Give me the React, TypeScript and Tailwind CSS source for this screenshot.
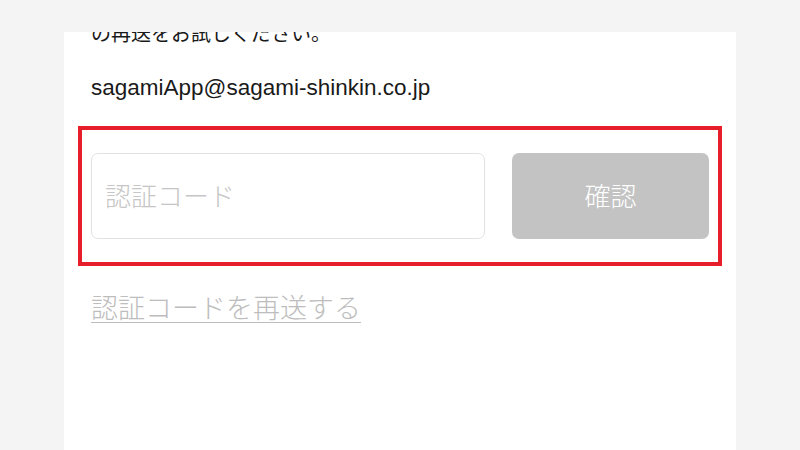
import React, { useState } from 'react';

const App: React.FC = () => {
  const [code, setCode] = useState('');

  return (
    <div className="h-[450px] w-[800px] bg-[#f4f4f4] flex justify-center pt-[32px] overflow-hidden">
      <div className="w-[672px] h-full bg-white overflow-hidden px-[27px] font-['Liberation_Sans','Noto_Sans_CJK_JP',sans-serif] text-[#1a1a1a]">
        {/* Message (top part scrolled out of view) */}
        <p className="-mt-[14px] text-[20px] leading-[30px] font-['Noto_Sans_CJK_JP',sans-serif]">
          の再送をお試しください。
        </p>
        <p className="mt-[25px] text-[22.5px] leading-[30px]">sagamiApp@sagami-shinkin.co.jp</p>

        {/* Highlighted input row */}
        <div className="mt-[23px] -mx-[13px] border-4 border-[#e61e2a] px-[9px] py-[23px]">
          <div className="flex items-center gap-[27px]">
            <input
              value={code}
              onChange={(e) => setCode(e.target.value)}
              placeholder="認証コード"
              className="w-[394px] h-[86px] rounded-[7px] border border-[#e2e2e2] px-[13px] pb-[4px] text-[26px] outline-none placeholder:text-[#c6c6c6] font-['Noto_Sans_CJK_JP',sans-serif] font-light"
            />
            <button
              disabled
              className="w-[197px] h-[86px] rounded-[7px] bg-[#c3c3c3] text-white text-[26px] pb-[4px] font-['Noto_Sans_CJK_JP',sans-serif] font-light"
            >
              確認
            </button>
          </div>
        </div>

        <a
          href="#"
          className="inline-block mt-[26px] text-[27px] leading-[30px] text-[#bdbdbd] underline underline-offset-[4px] decoration-1 font-['Noto_Sans_CJK_JP',sans-serif] font-light"
        >
          認証コードを再送する
        </a>
      </div>
    </div>
  );
};

export default App;
